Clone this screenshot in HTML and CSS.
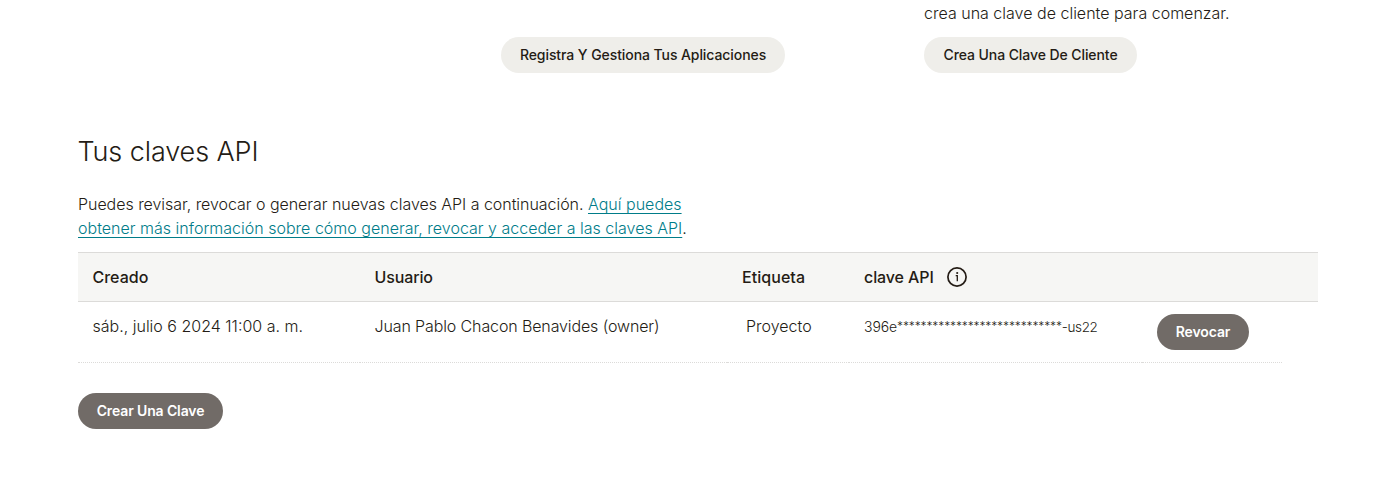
FILE: index.html
```html
<!DOCTYPE html>
<html lang="es">
<head>
<meta charset="utf-8">
<title>Claves API</title>
<link rel="stylesheet" href="styles.css">
</head>
<body>
<main class="page">
  <section class="intro">
    <div class="intro-card intro-apps">
      <button class="btn btn-light" type="button">Registra Y Gestiona Tus Aplicaciones</button>
    </div>
    <div class="intro-card intro-client">
      <p class="text">crea una clave de cliente para comenzar.</p>
      <button class="btn btn-light" type="button">Crea Una Clave De Cliente</button>
    </div>
  </section>

  <h2 class="title">Tus claves API</h2>
  <p class="text lead"><span class="lead-start">Puedes revisar, revocar o generar nuevas claves API a continuación.</span> <a class="link" href="#">Aquí puedes<br>obtener más información sobre cómo generar, revocar y acceder a las claves API</a>.</p>

  <div class="table">
    <div class="row head">
      <div class="cell">Creado</div>
      <div class="cell user">Usuario</div>
      <div class="cell tag">Etiqueta</div>
      <div class="cell head-key"><span>clave API</span>
        <svg class="info" viewBox="0 0 20 20" width="20" height="20"><circle cx="10" cy="10" r="9.1"/><path class="stem" d="M8.7 8.7h1.6v5.5"/><circle class="dot" cx="10.2" cy="6" r="1.05"/></svg>
      </div>
    </div>
    <div class="row body">
      <div class="cell">sáb., julio 6 2024 11:00 a. m.</div>
      <div class="cell user">Juan Pablo Chacon Benavides (owner)</div>
      <div class="cell label">Proyecto</div>
      <div class="cell key">396e<span class="stars">****************************</span><span class="suffix">-us22</span></div>
      <div class="cell action"><button class="btn btn-dark" type="button">Revocar</button></div>
    </div>
  </div>

  <button class="btn btn-dark create" type="button">Crear Una Clave</button>
</main>
</body>
</html>
```
FILE: styles.css
```css
* { box-sizing: border-box; }
body { margin: 0; background: #fff; color: #241c15; font-family: Inter, "Liberation Sans", sans-serif; font-size: 16px; font-weight: 300; line-height: 24px; }
.page { padding: 1px 62px 0 78px; }
.intro { display: grid; grid-template-columns: 423px 1fr; align-items: end; padding-left: 423px; }
.intro-card { display: flex; flex-direction: column; align-items: flex-start; }
.intro-client { gap: 12px; }
.text { margin: 0; letter-spacing: 0.01px; }
.btn { display: inline-flex; align-items: center; justify-content: center; height: 36px; padding: 0; border: 0; border-radius: 18px; font-family: inherit; font-size: 14px; line-height: 18px; letter-spacing: -0.08px; white-space: nowrap; }
.btn-light { background: #efeeea; color: #241c15; font-weight: 500; }
.btn-dark { background: #716b67; color: #fff; font-weight: 600; letter-spacing: -0.13px; }
.intro-apps .btn { width: 284px; }
.intro-client .btn { width: 213px; }
.title { margin: 61px 0 0 -0.5px; font-size: 27px; line-height: 36px; font-weight: 300; letter-spacing: -0.1px; }
.lead { margin-top: 22px; white-space: nowrap; }
.lead-start { letter-spacing: -0.04px; }
.link { color: #007c89; text-decoration: underline; text-decoration-thickness: 1px; text-underline-offset: 3px; text-decoration-skip-ink: none; }
.table { margin-top: 12px; width: 1240px; }
.row { display: grid; grid-template-columns: 282px 367px 122px 293px 140px; }
.cell { padding: 12px 0 0 14.5px; white-space: nowrap; }
.head { height: 50px; background: #f6f6f4; border-top: 1px solid #dcdbd9; border-bottom: 1px solid #dcdbd9; font-weight: 500; }
.tag { padding-left: 15px; letter-spacing: 0.05px; }
.head-key { display: flex; gap: 13px; padding-left: 15px; letter-spacing: -0.1px; }
.info { margin-top: 2px; fill: none; stroke: #241c15; stroke-width: 1.7; }
.info .stem { stroke-width: 1.3; }
.info .dot { fill: #241c15; stroke: none; }
.body .cell { height: 61px; border-bottom: 1px dotted #dcdbd9; }
.user { letter-spacing: -0.12px; }
.body .label { padding-left: 19px; }
.body .key { padding: 13px 0 0 15px; font-size: 14px; letter-spacing: -0.1px; }
.stars { font-size: 12px; line-height: 1; letter-spacing: -0.12px; vertical-align: 2px; }
.suffix { font-size: 13.5px; letter-spacing: -0.4px; }
.body .action { padding-left: 15px; }
.action .btn { width: 92px; }
.create { width: 145px; margin-top: 30px; }
```
